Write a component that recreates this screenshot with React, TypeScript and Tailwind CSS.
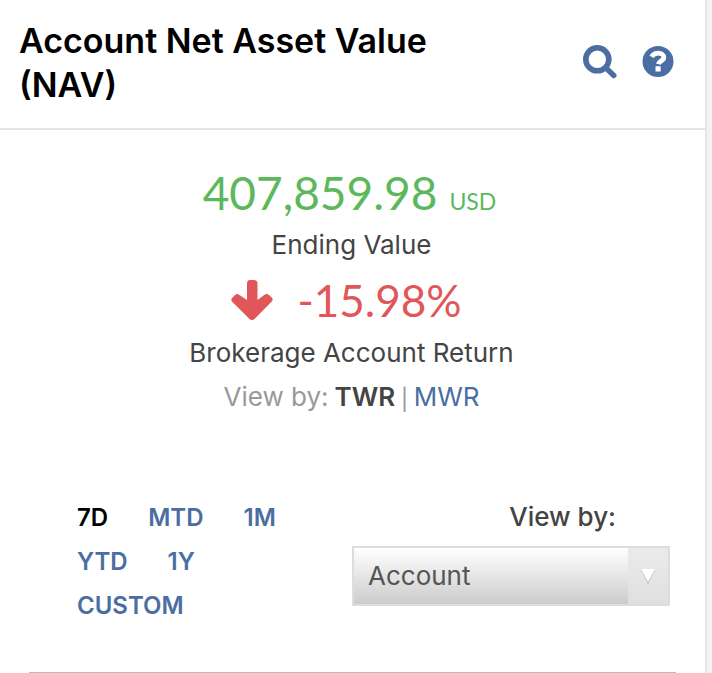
import { useState } from "react";

const periodRows = [["7D", "MTD", "1M"], ["YTD", "1Y"], ["CUSTOM"]];

function SearchIcon() {
  return (
    <svg viewBox="0 0 34 34" className="h-[34px] w-[34px]" fill="none" stroke="currentColor" aria-hidden="true">
      <circle cx="14.3" cy="14.3" r="11.5" strokeWidth="5.6" />
      <path d="M23.5 23.5l7.3 7" strokeWidth="5.4" strokeLinecap="round" />
    </svg>
  );
}

function HelpIcon() {
  return (
    <svg viewBox="0 0 32 32" className="h-8 w-8" aria-hidden="true">
      <circle cx="16" cy="15.5" r="15.5" fill="currentColor" />
      <path d="M9.500 10.800C11.300 8 13.400 7.200 16 7.200c3.600 0 5.800 1.900 5.800 4.300 0 3.300-4.700 3.500-5.500 6.700" fill="none" stroke="#fff" strokeWidth="4.800" />
      <rect x="13.500" y="20.200" width="5.200" height="5.200" rx="0.500" fill="#fff" />
    </svg>
  );
}

function DownArrow() {
  return (
    <svg viewBox="0 0 42 41" className="h-[41px] w-[42px]" aria-hidden="true">
      <path d="M16 3.500Q16 0 19 0h4q3.500 0 3.500 3.500V20l7-5.200q2.400-1.800 4.500.2l2.500 2.300q2.300 2.200 0 4.500L24 38.500q-3 3-6 0L1.500 21.900q-2.300-2.300 0-4.500L4 15.100q2.100-2 4.500-.2L16 20z" fill="#e15759" />
    </svg>
  );
}

export default function App() {
  const [method, setMethod] = useState("TWR");
  const [period, setPeriod] = useState("7D");

  return (
    <div className="min-h-screen bg-[#f3f3f3] pr-[5px] font-['Inter','Lato',sans-serif] text-[#444]">
      <main className="min-h-screen border-r-2 border-[#e5e5e5] bg-white">
        <header className="flex items-center justify-between border-b-2 border-[#e5e5e5] pt-[19px] pr-[31px] pb-[21px] pl-[19px]">
          <h1 className="max-w-[480px] text-[34px] leading-[44px] font-semibold text-black">
            Account Net Asset Value
            <br />
            (NAV)
          </h1>
          <div className="flex items-center gap-[25px] pb-[2px] text-[#4b6ea2]">
            <button type="button" aria-label="Search"><SearchIcon /></button>
            <button type="button" aria-label="Help"><HelpIcon /></button>
          </div>
        </header>

        <section className="flex flex-col items-center pt-[33px] pr-[30px] pb-[76px] pl-7 text-[26px] leading-[44px]">
          <div className="flex items-baseline gap-3 pr-1 font-['Lato',sans-serif] text-[#5cb85c]">
            <span className="text-[46px] leading-[60px]">407,859.98</span>
            <span className="text-[23px]">USD</span>
          </div>
          <p>Ending Value</p>
          <div className="flex items-center gap-6 pt-[2px] pr-[10px] font-['Lato',sans-serif] text-[#e15759]">
            <DownArrow />
            <span className="text-[44px] leading-[62px]">-15.98%</span>
          </div>
          <p>Brokerage Account Return</p>
          <div className="flex gap-[6px] text-[#999]">
            <span>View by:</span>
            <button type="button" onClick={() => setMethod("TWR")} className={method === "TWR" ? "font-semibold text-[#444]" : "text-[#4b6ea2]"}>TWR</button>
            <span className="font-['Lato',sans-serif]">|</span>
            <button type="button" onClick={() => setMethod("MWR")} className={method === "MWR" ? "font-semibold text-[#444]" : "text-[#4b6ea2]"}>MWR</button>
          </div>
        </section>

        <section className="mx-[29px] flex justify-between border-b border-[#bbb] pr-[6px] pb-[44px] pl-12">
          <div className="pt-px text-[24px] leading-[44px] font-semibold">
            {periodRows.map((row) => (
              <div key={row[0]} className="flex gap-10">
                {row.map((item) => (
                  <button key={item} type="button" onClick={() => setPeriod(item)} className={period === item ? "text-black" : "text-[#4b6ea2]"}>
                    {item}
                  </button>
                ))}
              </div>
            ))}
          </div>
          <div className="flex w-[318px] flex-col text-[26px]">
            <label htmlFor="view" className="pr-[54px] text-right leading-[44px] font-medium">View by:</label>
            <div className="relative mt-[7px]">
              <select id="view" className="h-[60px] w-full appearance-none border-2 border-[#ddd] bg-linear-to-b from-white to-[#ccc] pb-[2px] pl-[14px] text-[#555]">
                <option>Account</option>
              </select>
              <span className="pointer-events-none absolute inset-y-0.5 right-0.5 flex w-10 items-center justify-center bg-linear-to-b from-[#ebebeb] to-[#dfdfdf]">
                <svg viewBox="0 0 14 15" className="h-[15px] w-[14px]" aria-hidden="true">
                  <path d="M0 1h14L7 15z" fill="#bbb" />
                  <path d="M0 0h14L7 13z" fill="#fff" />
                </svg>
              </span>
            </div>
          </div>
        </section>
      </main>
    </div>
  );
}
